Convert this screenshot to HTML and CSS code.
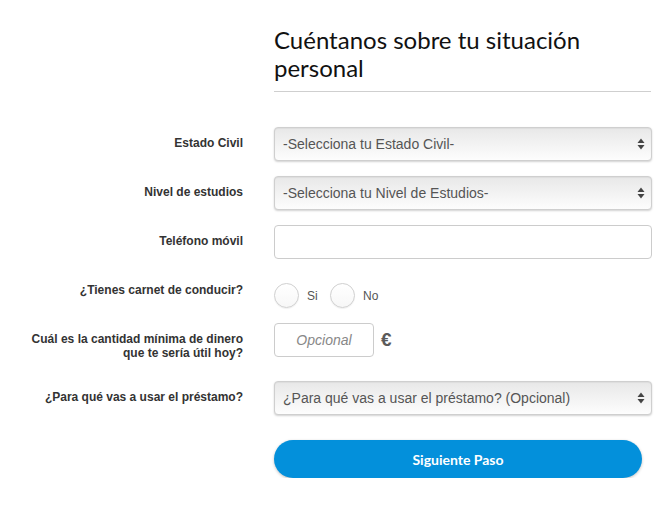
FILE: index.html
```html
<!DOCTYPE html>
<html lang="es">
<head>
<meta charset="utf-8">
<title>Cuéntanos sobre tu situación personal</title>
<link rel="stylesheet" href="styles.css">
</head>
<body>
<div class="page">
  <div class="head">
    <h1 class="title">Cuéntanos sobre tu situación personal</h1>
  </div>
  <form class="form">
    <div class="row">
      <label class="label">Estado Civil</label>
      <div class="control">
        <select class="select"><option>-Selecciona tu Estado Civil-</option></select>
      </div>
    </div>
    <div class="row">
      <label class="label">Nivel de estudios</label>
      <div class="control">
        <select class="select"><option>-Selecciona tu Nivel de Estudios-</option></select>
      </div>
    </div>
    <div class="row">
      <label class="label">Teléfono móvil</label>
      <div class="control">
        <input class="input" type="text">
      </div>
    </div>
    <div class="row">
      <label class="label">¿Tienes carnet de conducir?</label>
      <div class="control radios">
        <span class="radio"><span class="circle"></span><span class="radio-text">Si</span></span>
        <span class="radio"><span class="circle"></span><span class="radio-text">No</span></span>
      </div>
    </div>
    <div class="row">
      <label class="label">Cuál es la cantidad mínima de dinero<br>que te sería útil hoy?</label>
      <div class="control amount">
        <input class="input small" type="text" placeholder="Opcional">
        <span class="euro">€</span>
      </div>
    </div>
    <div class="row row-after-tall">
      <label class="label">¿Para qué vas a usar el préstamo?</label>
      <div class="control">
        <select class="select"><option>¿Para qué vas a usar el préstamo? (Opcional)</option></select>
      </div>
    </div>
    <div class="row row-button">
      <span class="label"></span>
      <div class="control">
        <button class="button" type="button">Siguiente Paso</button>
      </div>
    </div>
  </form>
</div>
</body>
</html>
```

FILE: styles.css
```css
html, body {
  margin: 0;
  padding: 0;
  background: #fff;
}

.page {
  padding-top: 26px;
  font-family: "Liberation Sans", Arial, sans-serif;
}

.head {
  margin-left: 274px;
  width: 377px;
  padding-bottom: 9px;
  border-bottom: 1px solid #cfcfcf;
}

.title {
  margin: 0;
  font-family: Lato, "Open Sans", sans-serif;
  font-weight: 400;
  font-size: 24px;
  line-height: 28px;
  color: #111;
  padding-right: 60px;
}

.form {
  margin-top: 35px;
  display: flex;
  flex-direction: column;
  gap: 15px;
}

.row {
  display: grid;
  grid-template-columns: 243px 378px;
  column-gap: 31px;
  height: 34px;
}

.row-after-tall {
  margin-top: 9px;
}

.row-button {
  margin-top: 10px;
  height: 38px;
}

.label {
  text-align: right;
  font-size: 12px;
  font-weight: 700;
  line-height: 13.5px;
  color: #333;
  padding-top: 10px;
}

.control {
  display: flex;
  align-items: flex-start;
}

.select {
  -webkit-appearance: none;
  appearance: none;
  width: 378px;
  height: 34px;
  margin: 0;
  padding: 0 24px 0 8px;
  border: 1px solid #cfcfcf;
  border-radius: 4px;
  font-family: "Liberation Sans", Arial, sans-serif;
  font-size: 14px;
  color: #555;
  background-color: #f2f2f2;
  background-image:
    url("data:image/svg+xml;utf8,<svg xmlns='http://www.w3.org/2000/svg' width='8' height='12' viewBox='0 0 8 12'><path d='M4 0.5 L7.5 5 L0.5 5 Z' fill='%23444'/><path d='M4 11.5 L7.5 7 L0.5 7 Z' fill='%23444'/></svg>"),
    linear-gradient(#e8e8e8, #fdfdfd);
  background-repeat: no-repeat, no-repeat;
  background-position: right 6px center, 0 0;
  background-size: 8px 12px, 100% 100%;
  box-shadow: 0 1px 2px rgba(0, 0, 0, 0.18), inset 0 1px 1px rgba(0, 0, 0, 0.05);
}

.input {
  width: 378px;
  height: 34px;
  box-sizing: border-box;
  margin: 0;
  padding: 0 8px;
  border: 1px solid #cccccc;
  border-radius: 4px;
  font-family: "Liberation Sans", Arial, sans-serif;
  font-size: 14px;
  color: #555;
  background: #fff;
  outline: none;
}

.input.small {
  width: 100px;
  text-align: center;
}

.input.small::placeholder {
  color: #888;
  font-style: italic;
}

.amount {
  gap: 7px;
}

.euro {
  font-size: 19px;
  font-weight: 700;
  color: #5a5a5a;
  line-height: 34px;
}

.radios {
  padding-top: 9px;
  gap: 7px;
}

.radio {
  display: flex;
  align-items: center;
  gap: 8px;
}

.circle {
  width: 23px;
  height: 23px;
  border: 1px solid #d0d0d0;
  border-radius: 50%;
  background: linear-gradient(#fff, #f7f7f7);
  box-shadow: 0 1px 1px rgba(0, 0, 0, 0.06);
}

.radio-text {
  font-size: 12px;
  color: #555;
  min-width: 16px;
}

.button {
  width: 368px;
  height: 38px;
  margin: 0;
  border: none;
  border-radius: 19px;
  background: #0390db;
  color: #fff;
  font-family: Lato, "Open Sans", sans-serif;
  font-weight: 700;
  font-size: 14px;
  box-shadow: 0 1px 3px rgba(0, 0, 0, 0.25);
  cursor: pointer;
}
```
